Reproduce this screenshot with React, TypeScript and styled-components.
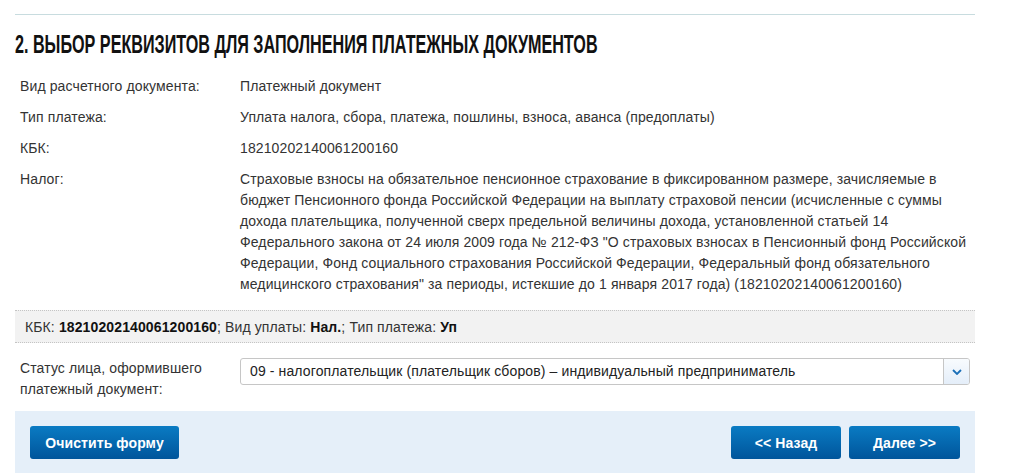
import React from "react";
import styled, { createGlobalStyle } from "styled-components";

const Global = createGlobalStyle`
  html, body { margin: 0; padding: 0; background: #fff; }
  body { font-family: Arial, "Liberation Sans", sans-serif; font-size: 14px; color: #333; letter-spacing: 0.12px; }
  * { box-sizing: border-box; }
`;

const Page = styled.div`
  width: 960px;
  margin-left: 15px;
  padding-top: 14px;
`;

const TopRule = styled.div`
  height: 1px;
  background: #c8dcdf;
`;

const Heading = styled.h2`
  margin: 0;
  padding: 15px 0 0 0;
  height: 56px;
  white-space: nowrap;
`;

const HeadingText = styled.span`
  display: inline-block;
  font-family: "Liberation Sans", Arial, sans-serif;
  font-weight: bold;
  font-size: 25px;
  line-height: 28px;
  letter-spacing: 0;
  color: #111;
  text-transform: uppercase;
  transform: scaleX(0.646);
  transform-origin: 0 50%;
`;

const Details = styled.div`
  display: grid;
  grid-template-columns: 220px 1fr;
  padding-left: 5px;
  padding-right: 5px;
`;

const Label = styled.div`
  padding: 5px 0;
  line-height: 21px;
  color: #333;
`;

const Value = styled.div`
  padding: 5px 0;
  line-height: 21px;
  color: #333;
`;

const KbkBand = styled.div`
  margin-top: 10px;
  height: 33px;
  background: #f2f2f2;
  border-top: 1px dotted #c4c4c4;
  border-bottom: 1px dotted #c4c4c4;
  padding: 0 10px;
  display: flex;
  align-items: center;
  color: #333;
  b { color: #111; }
`;

const StatusRow = styled.div`
  display: grid;
  grid-template-columns: 220px 1fr;
  padding: 15px 5px 0 5px;
  align-items: start;
`;

const StatusLabel = styled.div`
  line-height: 21px;
`;

const SelectBox = styled.div`
  width: 730px;
  height: 27px;
  border: 1px solid #c6c6c6;
  border-radius: 3px;
  display: flex;
  align-items: stretch;
  background: #fff;
`;

const SelectText = styled.div`
  flex: 1;
  padding-left: 9px;
  line-height: 25px;
  color: #222;
  white-space: nowrap;
  overflow: hidden;
`;

const SelectArrow = styled.div`
  width: 26px;
  border-left: 1px solid #c6c6c6;
  background: linear-gradient(#f8fbfe, #e4eef9);
  border-radius: 0 2px 2px 0;
  display: flex;
  align-items: center;
  justify-content: center;
`;

const Footer = styled.div`
  margin-top: 11px;
  background: #e5eff9;
  padding: 15px;
  display: flex;
  justify-content: space-between;
`;

const ButtonGroup = styled.div`
  display: flex;
  gap: 8px;
`;

const Button = styled.button<{ $w: number }>`
  width: ${(p) => p.$w}px;
  height: 33px;
  border: none;
  border-radius: 3px;
  background: linear-gradient(#0a7bc3, #00559b);
  color: #fff;
  font-family: Arial, "Liberation Sans", sans-serif;
  font-weight: bold;
  font-size: 14px;
  letter-spacing: 0.1px;
  padding: 0;
  cursor: pointer;
`;

export default function App() {
  return (
    <>
      <Global />
      <Page>
        <TopRule />
        <Heading>
          <HeadingText>2. Выбор реквизитов для заполнения платежных документов</HeadingText>
        </Heading>
        <Details>
          <Label>Вид расчетного документа:</Label>
          <Value>Платежный документ</Value>
          <Label>Тип платежа:</Label>
          <Value>Уплата налога, сбора, платежа, пошлины, взноса, аванса (предоплаты)</Value>
          <Label>КБК:</Label>
          <Value>18210202140061200160</Value>
          <Label>Налог:</Label>
          <Value>
            Страховые взносы на обязательное пенсионное страхование в фиксированном размере, зачисляемые в
            бюджет Пенсионного фонда Российской Федерации на выплату страховой пенсии (исчисленные с суммы
            дохода плательщика, полученной сверх предельной величины дохода, установленной статьей 14
            Федерального закона от 24 июля 2009 года № 212-ФЗ "О страховых взносах в Пенсионный фонд Российской
            Федерации, Фонд социального страхования Российской Федерации, Федеральный фонд обязательного
            медицинского страхования" за периоды, истекшие до 1 января 2017 года) (18210202140061200160)
          </Value>
        </Details>
        <KbkBand>
          <span>
            КБК: <b>18210202140061200160</b>; Вид уплаты: <b>Нал.</b>; Тип платежа: <b>Уп</b>
          </span>
        </KbkBand>
        <StatusRow>
          <StatusLabel>
            Статус лица, оформившего
            <br />
            платежный документ:
          </StatusLabel>
          <SelectBox>
            <SelectText>09 - налогоплательщик (плательщик сборов) – индивидуальный предприниматель</SelectText>
            <SelectArrow>
              <svg width="10" height="6" viewBox="0 0 10 6">
                <path d="M1 1 L5 5 L9 1" fill="none" stroke="#1a6fb8" strokeWidth="1.8" />
              </svg>
            </SelectArrow>
          </SelectBox>
        </StatusRow>
        <Footer>
          <Button $w={149}>Очистить форму</Button>
          <ButtonGroup>
            <Button $w={110}>&lt;&lt; Назад</Button>
            <Button $w={111}>Далее &gt;&gt;</Button>
          </ButtonGroup>
        </Footer>
      </Page>
    </>
  );
}
